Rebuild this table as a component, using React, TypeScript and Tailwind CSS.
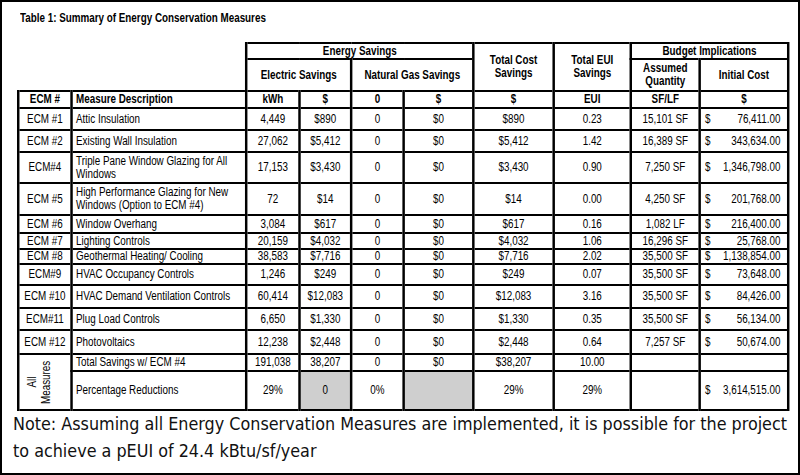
const sans = "font-['Liberation_Sans',Arial,sans-serif]"

type Row = {
  id: string
  desc: string
  kwh: string
  el: string
  g0: string
  g: string
  tc: string
  eui: string
  qty: string
  cost: string
  h: string
}

const rows: Row[] = [
  { id: "ECM #1", desc: "Attic Insulation", kwh: "4,449", el: "$890", g0: "0", g: "$0", tc: "$890", eui: "0.23", qty: "15,101 SF", cost: "76,411.00", h: "h-[22px]" },
  { id: "ECM #2", desc: "Existing Wall Insulation", kwh: "27,062", el: "$5,412", g0: "0", g: "$0", tc: "$5,412", eui: "1.42", qty: "16,389 SF", cost: "343,634.00", h: "h-[22px]" },
  { id: "ECM#4", desc: "Triple Pane Window Glazing for All Windows", kwh: "17,153", el: "$3,430", g0: "0", g: "$0", tc: "$3,430", eui: "0.90", qty: "7,250 SF", cost: "1,346,798.00", h: "h-[31px]" },
  { id: "ECM #5", desc: "High Performance Glazing for New Windows (Option to ECM #4)", kwh: "72", el: "$14", g0: "0", g: "$0", tc: "$14", eui: "0.00", qty: "4,250 SF", cost: "201,768.00", h: "h-[32px]" },
  { id: "ECM #6", desc: "Window Overhang", kwh: "3,084", el: "$617", g0: "0", g: "$0", tc: "$617", eui: "0.16", qty: "1,082 LF", cost: "216,400.00", h: "h-[18px]" },
  { id: "ECM #7", desc: "Lighting Controls", kwh: "20,159", el: "$4,032", g0: "0", g: "$0", tc: "$4,032", eui: "1.06", qty: "16,296 SF", cost: "25,768.00", h: "h-[16px]" },
  { id: "ECM #8", desc: "Geothermal Heating/ Cooling", kwh: "38,583", el: "$7,716", g0: "0", g: "$0", tc: "$7,716", eui: "2.02", qty: "35,500 SF", cost: "1,138,854.00", h: "h-[14px]" },
  { id: "ECM#9", desc: "HVAC Occupancy Controls", kwh: "1,246", el: "$249", g0: "0", g: "$0", tc: "$249", eui: "0.07", qty: "35,500 SF", cost: "73,648.00", h: "h-[21px]" },
  { id: "ECM #10", desc: "HVAC Demand Ventilation Controls", kwh: "60,414", el: "$12,083", g0: "0", g: "$0", tc: "$12,083", eui: "3.16", qty: "35,500 SF", cost: "84,426.00", h: "h-[23px]" },
  { id: "ECM#11", desc: "Plug Load Controls", kwh: "6,650", el: "$1,330", g0: "0", g: "$0", tc: "$1,330", eui: "0.35", qty: "35,500 SF", cost: "56,134.00", h: "h-[22px]" },
  { id: "ECM #12", desc: "Photovoltaics", kwh: "12,238", el: "$2,448", g0: "0", g: "$0", tc: "$2,448", eui: "0.64", qty: "7,257 SF", cost: "50,674.00", h: "h-[24px]" },
]

// the source table is set in a narrow face; no narrow font is installed, so the
// whole table is laid out wider and squeezed back to 82%
const td = "border-2 border-x-[3px] border-black p-0 text-center align-middle leading-[13px]"
const left = `${td} pl-[4px] text-left`
const grey = `${td} bg-[#cfcfcf]`

function CostCell({ value }: { value: string }) {
  return (
    <td className={td}>
      <div className="flex justify-between pl-[5px] pr-[8px]">
        <span>$</span>
        <span>{value}</span>
      </div>
    </td>
  )
}

export default function App() {
  return (
    <div className="box-border h-[475px] w-[800px] overflow-hidden border-2 border-black bg-white text-black">
      <div className="pl-[18px] pt-[9px]">
        <div className={`${sans} w-max origin-left scale-x-[0.82] text-[12px] font-bold leading-[14px]`}>
          Table 1: Summary of Energy Conservation Measures
        </div>
      </div>

      <div className="ml-[15px] mt-[17px] w-[770px]">
        <table className={`${sans} w-[939px] origin-left scale-x-[0.82] table-fixed border-collapse text-[12px] text-black`}>
          <colgroup>
            <col className="w-[65px]" />
            <col className="w-[213px]" />
            <col className="w-[65px]" />
            <col className="w-[63px]" />
            <col className="w-[64px]" />
            <col className="w-[85px]" />
            <col className="w-[98px]" />
            <col className="w-[94px]" />
            <col className="w-[84px]" />
            <col className="w-[108px]" />
          </colgroup>
          <tbody>
            {/* header rows */}
            <tr className="h-[16px] font-bold">
              <td colSpan={2} rowSpan={2} className="border-0 p-0" />
              <td colSpan={4} className={td}>Energy Savings</td>
              <td rowSpan={2} className={td}>Total Cost<br />Savings</td>
              <td rowSpan={2} className={td}>Total EUI<br />Savings</td>
              <td colSpan={2} className={td}>Budget Implications</td>
            </tr>
            <tr className="h-[32px] font-bold">
              <td colSpan={2} className={td}>Electric Savings</td>
              <td colSpan={2} className={td}>Natural Gas Savings</td>
              <td className={td}>Assumed<br />Quantity</td>
              <td className={td}>Initial Cost</td>
            </tr>
            <tr className="h-[17px] font-bold">
              <td className={td}>ECM #</td>
              <td className={left}>Measure Description</td>
              <td className={td}>kWh</td>
              <td className={td}>$</td>
              <td className={td}>0</td>
              <td className={td}>$</td>
              <td className={td}>$</td>
              <td className={td}>EUI</td>
              <td className={td}>SF/LF</td>
              <td className={td}>$</td>
            </tr>

            {rows.map((r) => (
              <tr key={r.id} className={r.h}>
                <td className={td}>{r.id}</td>
                <td className={left}>{r.desc}</td>
                <td className={td}>{r.kwh}</td>
                <td className={td}>{r.el}</td>
                <td className={td}>{r.g0}</td>
                <td className={td}>{r.g}</td>
                <td className={td}>{r.tc}</td>
                <td className={td}>{r.eui}</td>
                <td className={td}>{r.qty}</td>
                <CostCell value={r.cost} />
              </tr>
            ))}

            {/* totals */}
            <tr className="h-[17px]">
              <td rowSpan={2} className={td}>
                <div className="flex justify-center pr-[14px]">
                  {/* undo the table squeeze sideways, squeeze along the text instead */}
                  <div className="rotate-180 scale-x-[1.22] scale-y-[0.82] text-center text-[12px] leading-[14px] [writing-mode:vertical-rl]">
                    All<br />Measures
                  </div>
                </div>
              </td>
              <td className={left}>Total Savings w/ ECM #4</td>
              <td className={td}>191,038</td>
              <td className={td}>38,207</td>
              <td className={td}>0</td>
              <td className={td}>$0</td>
              <td className={td}>$38,207</td>
              <td className={td}>10.00</td>
              <td className={td} />
              <td className={td} />
            </tr>
            <tr className="h-[39px]">
              <td className={left}>Percentage Reductions</td>
              <td className={td}>29%</td>
              <td className={grey}>0</td>
              <td className={td}>0%</td>
              <td className={grey} />
              <td className={td}>29%</td>
              <td className={td}>29%</td>
              <td className={td} />
              <CostCell value="3,614,515.00" />
            </tr>
          </tbody>
        </table>
      </div>

      <p className="ml-[11px] mt-[-1px] font-['DejaVu_Sans_Condensed','DejaVu_Sans',sans-serif] text-[17.8px] leading-[27px] text-[#111]">
        Note: Assuming all Energy Conservation Measures are implemented, it is possible for the project
        <br />
        to achieve a pEUI of 24.4 kBtu/sf/year
      </p>
    </div>
  )
}
